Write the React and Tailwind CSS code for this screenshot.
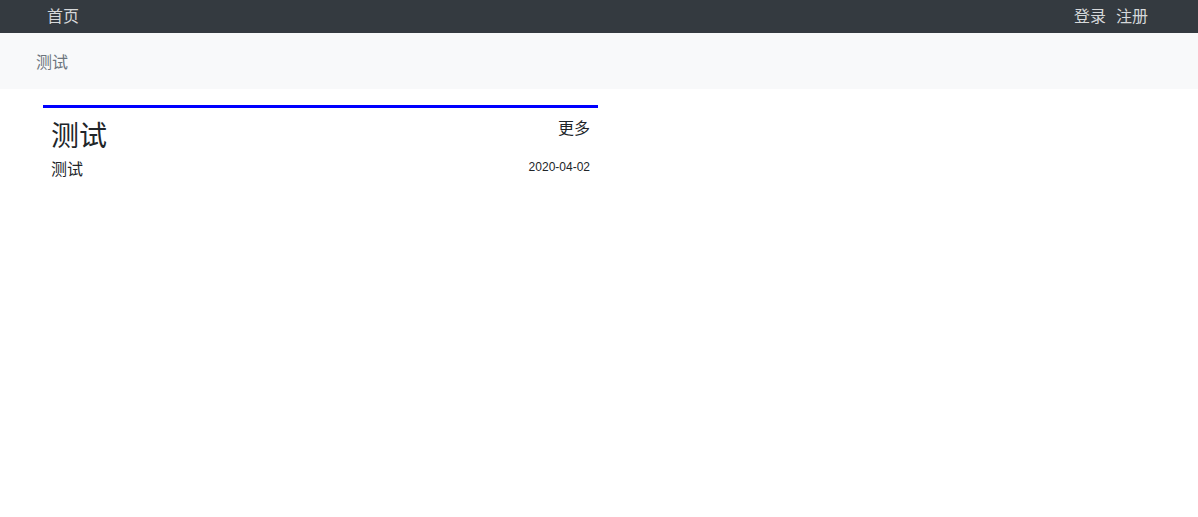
export default function App() {
  return (
    <div className="min-h-[517px] bg-white text-[#212529]" style={{ fontFamily: '"Liberation Sans", "Noto Sans CJK SC", sans-serif' }}>
      <nav className="h-[33px] bg-[#343a40] flex items-center justify-between pl-[47px] pr-[50px]">
        <a className="text-[16px] leading-[33px] text-[#d6d8da]">首页</a>
        <div className="flex gap-[10px] text-[16px] text-[#d6d8da]">
          <a>登录</a>
          <a>注册</a>
        </div>
      </nav>
      <div className="h-[56px] bg-[#f8f9fa] flex items-center pl-[36px] pt-[3px]">
        <span className="text-[16px] text-[#6c757d]">测试</span>
      </div>
      <div className="pl-[43px] pt-[16px]">
        <div className="w-[555px] border-t-[3px] border-[#0000ff] px-[8px]">
          <div className="flex items-start justify-between pt-[12px]">
            <h2 className="text-[28px] leading-[34px]">测试</h2>
            <a className="text-[16px] leading-[18px] text-[#212529]">更多</a>
          </div>
          <div className="flex items-start justify-between mt-[6px]">
            <span className="text-[16px] leading-[20px]">测试</span>
            <span className="text-[12px] leading-[14px]">2020-04-02</span>
          </div>
        </div>
      </div>
    </div>
  );
}
